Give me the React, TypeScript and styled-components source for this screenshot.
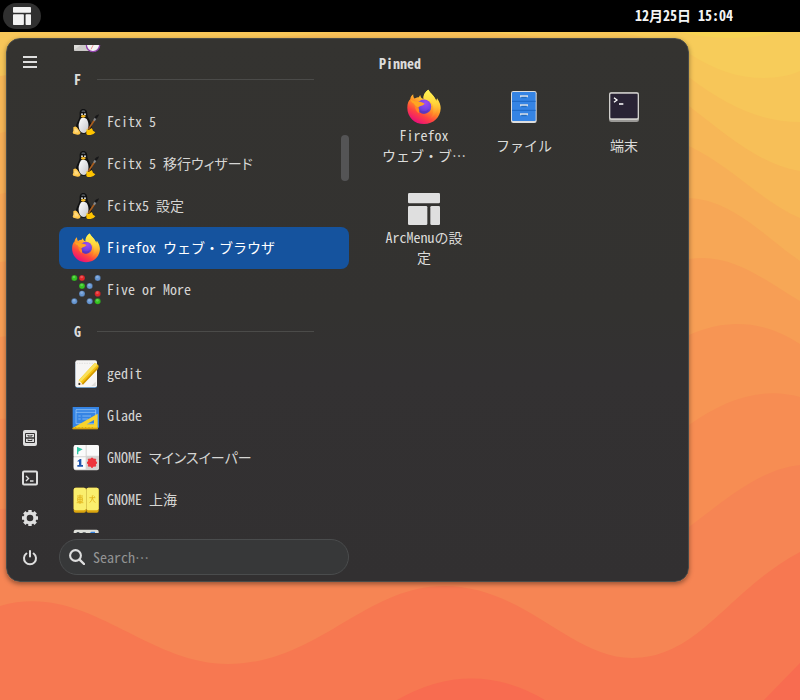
import React, { useId, useLayoutEffect, useRef } from "react";
import styled, { createGlobalStyle } from "styled-components";

const GlobalStyle = createGlobalStyle`
  *, *::before, *::after { box-sizing: border-box; }
  body {
    margin: 0;
    background: #f77851;
    color: #dcdcda;
    font: 14px/20px "Noto Sans CJK JP", "Noto Sans", sans-serif;
    font-feature-settings: "hwid", "palt";
  }
  button, input { font: inherit; font-feature-settings: inherit; color: inherit; }
  button { border: 0; padding: 0; background: none; cursor: pointer; }
  svg { display: block; flex: none; }
`;

const Desktop = styled.div`
  position: relative;
  min-height: 100vh;
  overflow: hidden;
`;

const Wallpaper = styled.svg`
  position: absolute;
  inset: 0;
  width: 100%;
  height: 100%;
`;

const TopBar = styled.header`
  position: relative;
  display: flex;
  align-items: center;
  justify-content: space-between;
  height: 32px;
  padding: 0 67px 0 3px;
  background: #000;
`;

const Launcher = styled.button`
  display: grid;
  place-items: center;
  width: 38px;
  height: 26px;
  border-radius: 13px;
  background: #303030;
`;

const Clock = styled.time`
  padding-bottom: 2px;
  color: #f4f4f4;
  font-weight: 700;
`;

const MenuPanel = styled.main`
  position: relative;
  display: grid;
  grid-template-columns: 40px 290px minmax(0, 1fr);
  column-gap: 9px;
  width: calc(100% - 12px);
  max-width: 683px;
  margin: 6px;
  padding: 3px;
  border: 1px solid #474a49;
  border-radius: 14px;
  background: linear-gradient(#343330, #333230 50%, #333132 62%, #323031);
  box-shadow: 0 2px 5px rgba(0, 0, 0, 0.4);
`;

const Rail = styled.nav`
  display: flex;
  flex-direction: column;
  justify-content: space-between;
`;

const RailButton = styled.button`
  display: grid;
  place-items: center;
  width: 40px;
  height: 40px;
  border-radius: 8px;
`;

const AppColumn = styled.section`
  display: flex;
  flex-direction: column;
  gap: 6px;
  padding: 3px 0;
`;

const ScrollFrame = styled.div`
  position: relative;
`;

const AppList = styled.div`
  height: 488px;
  overflow-y: auto;
  scrollbar-width: none;
`;

const ScrollThumb = styled.div`
  position: absolute;
  top: 90px;
  right: 0;
  width: 8px;
  height: 46px;
  border-radius: 4px;
  background: #545455;
`;

const AppRow = styled.button<{ $selected?: boolean }>`
  display: flex;
  align-items: center;
  gap: 6px;
  width: 100%;
  height: 42px;
  padding: 0 12px;
  border-radius: 8px;
  text-align: left;
  white-space: nowrap;
  color: ${(p) => (p.$selected ? "#fff" : "#d6d6d4")};
  background: ${(p) => (p.$selected ? "#15539e" : "transparent")};
`;

const AppName = styled.span<{ $fullWidth?: boolean }>`
  padding-bottom: 2px;
  font-feature-settings: ${(p) => (p.$fullWidth ? '"hwid"' : "inherit")};
`;

const GroupHeading = styled.h2`
  display: flex;
  align-items: center;
  gap: 16px;
  height: 42px;
  margin: 0;
  padding: 0 35px 2px 15px;
  font-size: 14px;
  font-weight: 700;

  &::after {
    content: "";
    flex: 1;
    height: 1px;
    background: #4b4b49;
  }
`;

const SearchBox = styled.label`
  display: flex;
  align-items: center;
  gap: 8px;
  height: 36px;
  padding: 0 9px;
  border: 1px solid #4a4c4d;
  border-radius: 18px;
  background: #373839;
`;

const SearchInput = styled.input`
  flex: 1;
  min-width: 0;
  padding: 0;
  border: 0;
  outline: 0;
  background: transparent;

  &::placeholder { color: #939494; opacity: 1; }
`;

const PinnedColumn = styled.section`
  margin-left: 16px;
  padding: 11px 0;
`;

const PinnedTitle = styled.h2`
  margin: 0 0 16px 5px;
  font-size: 14px;
  font-weight: 700;
`;

const PinnedGrid = styled.div`
  display: grid;
  grid-template-columns: repeat(3, 100px);
  row-gap: 6px;
`;

const PinnedTile = styled.button`
  display: flex;
  flex-direction: column;
  align-items: center;
  height: 96px;
`;

const PinnedLabel = styled.span`
  display: flex;
  align-items: center;
  height: 40px;
  text-align: center;
  white-space: pre-line;
  font-feature-settings: "hwid";
`;

const waves: [string, string][] = [
  ["#f7c659", "M0 32H340C420 40 520 32 600 32Q645 32 690 54C715 70 738 78 764 78Q785 78 800 71V700H0Z"],
  ["#f7bf58", "M0 76C300 20 560 10 690 78C730 108 763 122 800 122V700H0Z"],
  ["#f7b757", "M0 76C200 60 500 20 689 106C730 138 762 165 800 171V700H0Z"],
  ["#f7af57", "M0 133C200 90 500 60 689 146C730 165 762 202 800 218V700H0Z"],
  ["#f7a756", "M0 194C200 150 500 190 689 198C733 200 765 237 800 261V700H0Z"],
  ["#f79e55", "M0 262C200 240 500 290 689 259C733 252 765 281 800 301V700H0Z"],
  ["#f79554", "M0 337C200 310 500 390 689 335C725 319 762 319 800 344V700H0Z"],
  ["#f78d53", "M0 419C200 400 500 520 689 425C727 398 762 387 800 397V700H0Z"],
  ["#f68554", "M0 509C200 500 500 640 689 527C725 500 760 469 800 465V700H0Z"],
  ["#f77851", "M0 606C86 581 144 664 228 664C317 664 365 586 444 586C525 586 570 658 632 658C699 658 728 590 800 552V700H0Z"],
  ["#f86c50", "M397 700Q472 657 545 700ZM764 700L800 663V700Z"],
];

const DesktopBackground = () => (
  <Wallpaper viewBox="0 0 800 700" preserveAspectRatio="none" aria-hidden="true">
    <rect width="800" height="700" fill="#f7cc5a" />
    <path d="M672 30Q730 46 790 30Z" fill="#f7d354" />
    {waves.map(([fill, d]) => (
      <path key={fill} fill={fill} d={d} />
    ))}
  </Wallpaper>
);

type IconProps = { size?: number };

const LayoutIcon = ({ size = 18, color = "#dfdfdf" }: IconProps & { color?: string }) => (
  <svg width={size} height={size} viewBox="6 6 96 96" fill={color}>
    <rect x="6" y="6" width="96" height="31" rx="4" />
    <rect x="6" y="45" width="58" height="57" rx="4" />
    <rect x="73" y="45" width="29" height="57" rx="4" />
  </svg>
);

const FirefoxIcon = ({ size = 30 }: IconProps) => {
  const id = useId();
  return (
    <svg width={size} height={size} viewBox="-4 -1 110 108">
      <defs>
        <linearGradient id={id + "b"} x1="80" y1="8" x2="28" y2="100" gradientUnits="userSpaceOnUse">
          <stop offset="0" stopColor="#fff44f" />
          <stop offset=".3" stopColor="#ffc235" />
          <stop offset=".52" stopColor="#ff8a26" />
          <stop offset=".74" stopColor="#ff4440" />
          <stop offset="1" stopColor="#ea1078" />
        </linearGradient>
        <linearGradient id={id + "y"} x1="70" y1="0" x2="70" y2="95" gradientUnits="userSpaceOnUse">
          <stop offset="0" stopColor="#fff656" />
          <stop offset=".45" stopColor="#ffd43a" />
          <stop offset="1" stopColor="#ff7a2c" stopOpacity="0" />
        </linearGradient>
        <radialGradient id={id + "p"} cx=".6" cy=".25" r=".8">
          <stop offset="0" stopColor="#a04ef2" />
          <stop offset=".55" stopColor="#7542e5" />
          <stop offset="1" stopColor="#4b3ab8" />
        </radialGradient>
      </defs>
      <path fill={`url(#${id}b)`} d="M65 0C70 12 83 18 88 34L91 26C99 37 102 47 102 57C101 85 80 105 51 105C22 105 0 84 0 55C0 41 4 33 9 29C10 22 13 18 18 14C18 20 19 24 22 27C27 24 32 23 36 23C36 20 38 18 40 17C40 23 44 27 50 28C48 18 54 6 65 0Z" />
      <path fill={`url(#${id}y)`} d="M65 0C70 12 83 18 88 34C96 52 92 78 68 90C79 78 84 60 76 44C71 34 57 32 50 28C48 18 54 6 65 0Z" />
      <circle cx="51" cy="52" r="22" fill={`url(#${id}p)`} />
      <path fill="#ff8424" d="M34 53C35 60 40 66 34 72C26 65 22 55 22 44Z" />
      <path fill="#ffa522" d="M10 29C16 35 23 34 31 36C41 36 48 40 53 43C48 50 38 49 34 54C27 51 22 47 20 42C15 41 11 36 10 29Z" />
      <path fill="#5a34b9" d="M38 62C47 69 59 66 66 59C60 79 38 77 38 62Z" opacity=".6" />
    </svg>
  );
};

const PenguinIcon = () => {
  const id = useId();
  return (
    <svg width="30" height="30" viewBox="0 0 90 90">
      <defs>
        <linearGradient id={id} x1="0" y1="0" x2="1" y2="1">
          <stop offset="0" stopColor="#fff" />
          <stop offset="1" stopColor="#c4c4ca" />
        </linearGradient>
      </defs>
      <path fill="#101112" d="M37 6C46 6 49 13 49 22C49 33 61 43 62 59C63 70 54 80 39 80C23 80 14 72 15 59C16 47 26 37 26 25C25 13 28 6 37 6Z" />
      <path fill="#54595e" d="M31 12Q36 7 43 12L41 16Q36 12 33 16Z" />
      <path fill={`url(#${id})`} d="M30 34Q39 30 47 36C56 49 54 74 40 78C27 79 22 65 23 52Q25 42 30 34Z" />
      <circle cx="33" cy="22" r="3" fill="#d8d8d8" />
      <circle cx="42" cy="22" r="3" fill="#d8d8d8" />
      <path fill="#f6b922" d="M30 26Q37 21 45 27Q38 36 30 29Z" />
      <path fill="#ffc84c" d="M7 61Q15 55 20 64L29 77Q26 85 19 83L7 80Q3 77 7 71Z" />
      <path fill="#fff0be" d="M10 67Q15 61 20 69L22 76L11 77Z" opacity=".45" />
      <path fill="#ffc400" d="M47 66Q54 72 61 63Q65 66 66 71L73 76Q69 82 59 84L50 84Q44 82 46 75Z" />
      <path d="M52 67L70 40" stroke="#a95d1e" strokeWidth="5" />
      <path d="M69 41L74 33" stroke="#87898c" strokeWidth="6" />
      <path fill="#171719" d="M70 32Q73 25 84 22Q84 28 76 36Z" />
    </svg>
  );
};

const dots: [number, number, string][] = [
  [10, 9, "#35c41f"], [33, 9, "#e3282a"], [80, 9, "#6797d2"],
  [33, 33, "#35c41f"], [56, 33, "#6797d2"], [33, 56, "#6797d2"],
  [80, 56, "#e3282a"], [10, 79, "#6797d2"], [56, 79, "#6797d2"], [80, 79, "#35c41f"],
];

const FiveOrMoreIcon = () => (
  <svg width="30" height="30" viewBox="0 0 90 90">
    {dots.map(([x, y, fill]) => (
      <g key={`${x}-${y}`}>
        <circle cx={x} cy={y} r="9" fill={fill} stroke="#292a2c" strokeOpacity=".4" strokeWidth="2" />
        <circle cx={x - 1} cy={y - 3} r="4" fill="#fff" opacity=".22" />
      </g>
    ))}
  </svg>
);

const GeditIcon = () => (
  <svg width="30" height="30" viewBox="0 0 90 90">
    <rect x="13" y="8" width="65" height="79" rx="6" fill="#457bae" />
    <rect x="13" y="4" width="65" height="81" rx="6" fill="#f6f5f4" />
    <path d="M19 13H71" stroke="#c9c7c4" strokeWidth="2" strokeDasharray="2 3" />
    <path d="M61 81L74 68V81Z" fill="#dddbd8" />
    <path d="M23 64L68 15Q72 10 78 15L83 20L81 29L36 76Z" fill="#f5c211" />
    <path d="M23 64L68 15Q71 11 75 13L79 17L29 69Z" fill="#f9e05a" />
    <path d="M32 74L82 22L81 29L36 77Z" fill="#cf9500" />
    <path d="M22 65L35 77L23 77Z" fill="#f0d5b3" />
    <circle cx="25" cy="75" r="3" fill="#272727" />
  </svg>
);

const GladeIcon = () => (
  <svg width="30" height="30" viewBox="0 0 90 90">
    <rect x="5" y="18" width="79" height="62" fill="#3584e4" />
    <path d="M15 26H74V68H15ZM15 34H74M22 45H29M34 45H60M22 54H29M34 54H52" fill="none" stroke="#a3cef7" strokeWidth="2" />
    <path fillRule="evenodd" d="M5 81L80 38V84H5ZM47 70H69V57Z" fill="#f8d32c" />
    <path d="M5 80H80V85H5Z" fill="#d8a10b" />
    <path d="M14 78V80M24 78V80M34 78V80M44 78V80M54 78V80M64 78V80" stroke="#9b790b" strokeWidth="2" />
  </svg>
);

const MinesIcon = () => (
  <svg width="30" height="30" viewBox="0 0 90 90">
    <rect x="8" y="6" width="76" height="76" rx="6" fill="#d5d3d1" />
    <path d="M14 6H44V40H8V12Q8 6 14 6ZM47 6H78Q84 6 84 12V38H47ZM8 43H44V79H14Q8 79 8 73Z" fill="#fafafa" />
    <path d="M19 12L35 19L22 26V34H18V12Z" fill="#2ec6a4" />
    <path d="M20 53L27 48H31V66H36V71H19V66H24V55L20 57Z" fill="#1f55ad" />
    <circle cx="63" cy="59" r="13" fill="#ed333b" />
    <path d="M63 44V74M48 59H78M52 48L74 70M74 48L52 70" stroke="#ed333b" strokeWidth="6" />
  </svg>
);

const MahjonggIcon = () => (
  <svg width="30" height="30" viewBox="0 0 90 90">
    <rect x="8" y="8" width="37" height="75" rx="6" fill="#dba50e" />
    <rect x="46" y="8" width="37" height="75" rx="6" fill="#dba50e" />
    <rect x="8" y="8" width="37" height="68" rx="6" fill="#faee6d" />
    <rect x="46" y="8" width="37" height="68" rx="6" fill="#faee6d" />
    <path d="M18 33H36M20 38H34V49H20ZM20 43H34M17 53H37M27 29V57M55 38H73M64 31V39Q62 48 56 53M64 39Q66 48 73 53M68 32L71 35" fill="none" stroke="#e2b51c" strokeWidth="2.6" />
  </svg>
);

const ClockFileIcon = () => (
  <svg width="30" height="30" viewBox="0 0 90 90">
    <rect x="9" y="8" width="62" height="76" rx="2" fill="#c9c7c5" />
    <rect x="9" y="8" width="62" height="71" rx="2" fill="#deddda" />
    <path d="M13 78L38 60L50 78Z" fill="#cccac8" />
    <circle cx="66" cy="66" r="20" fill="#f6f5f4" stroke="#9141ac" strokeWidth="4" />
    <path d="M66 52V67L60 79" fill="none" stroke="#e66168" strokeWidth="2" />
  </svg>
);

const TilesIcon = () => (
  <svg width="30" height="30" viewBox="0 0 90 90">
    <rect x="8" y="8" width="75" height="75" rx="6" fill="#dedfd9" />
    <path d="M17 15H25V25H17ZM35 16H44V30H35Z" fill="#4c5358" />
    <path d="M50 24L61 14H72V30H50Z" fill="#3584e4" />
  </svg>
);

const FilesIcon = () => (
  <svg width="36" height="36" viewBox="0 0 108 108">
    <rect x="15" y="6" width="77" height="96" rx="7" fill="#dedede" />
    <rect x="18" y="9" width="71" height="87" rx="3" fill="#3584e4" />
    <path d="M18 37H89M18 64H89" stroke="#1c68c5" strokeWidth="3" />
    <path d="M44 25V21H64V25M44 52V48H64V52M44 79V75H64V79" fill="none" stroke="#d5dce4" strokeWidth="4" />
    <path d="M46 26H62M46 53H62M46 80H62" stroke="#2369b6" strokeWidth="3" />
  </svg>
);

const TerminalIcon = () => (
  <svg width="36" height="36" viewBox="0 0 108 108">
    <rect x="9" y="10" width="90" height="89" rx="7" fill="#9a9996" />
    <rect x="9" y="10" width="90" height="83" rx="7" fill="#d0cfcc" />
    <rect x="13" y="14" width="82" height="74" rx="3" fill="#292335" />
    <path d="M24 26L33 33L24 40M39 45H52" fill="none" stroke="#fff" strokeWidth="4" />
  </svg>
);

const HamburgerGlyph = () => (
  <svg width="14" height="12" viewBox="0 0 14 12" fill="#dedede">
    <path d="M0 0H14V2H0ZM0 5H14V7H0ZM0 10H14V12H0Z" />
  </svg>
);

const CabinetGlyph = () => (
  <svg width="16" height="16" viewBox="0 0 16 16" fill="none">
    <rect x="1" y="0" width="14" height="16" rx="2" fill="#dedede" />
    <path d="M3.5 3.5H12.5V8H3.5ZM3.5 8H12.5V12.5H3.5Z" stroke="#323031" />
    <path d="M6 5V6H10V5M6 9.5V10.5H10V9.5" stroke="#323031" />
  </svg>
);

const PromptGlyph = () => (
  <svg width="16" height="16" viewBox="0 0 16 16" fill="none" stroke="#dedede">
    <rect x="1" y="1.5" width="14" height="13" rx="1" strokeWidth="2" />
    <path d="M4 6L6.5 8.5L4 11M8 11H11.5" strokeWidth="1.4" />
  </svg>
);

const GearGlyph = () => (
  <svg width="16" height="16" viewBox="0 0 16 16" fill="none" stroke="#dedede">
    <circle cx="8" cy="8" r="4.9" strokeWidth="3.2" />
    <path d="M8 0V2.4M8 13.6V16M0 8H2.4M13.6 8H16M2.3 2.3L4 4M12 12L13.7 13.7M13.7 2.3L12 4M4 12L2.3 13.7" strokeWidth="3.4" />
  </svg>
);

const PowerGlyph = () => (
  <svg width="16" height="16" viewBox="0 0 16 16" fill="none" stroke="#dedede" strokeWidth="2" strokeLinecap="round">
    <path d="M4.4 3.5A6 6 0 1 0 11.6 3.5M8 1V6.5" />
  </svg>
);

const SearchGlyph = () => (
  <svg width="16" height="16" viewBox="0 0 16 16" fill="none" stroke="#dedede" strokeLinecap="round">
    <circle cx="6.5" cy="6.5" r="5.4" strokeWidth="2.1" />
    <path d="M10.8 10.8L15 15" strokeWidth="2.4" />
  </svg>
);

type AppEntry = { name: string; Icon: React.ComponentType; selected?: boolean };

const groups: { letter?: string; apps: AppEntry[] }[] = [
  { apps: [{ name: "", Icon: ClockFileIcon }] },
  {
    letter: "F",
    apps: [
      { name: "Fcitx 5", Icon: PenguinIcon },
      { name: "Fcitx 5 移行ウィザード", Icon: PenguinIcon },
      { name: "Fcitx5 設定", Icon: PenguinIcon },
      { name: "Firefox ウェブ・ブラウザ", Icon: FirefoxIcon, selected: true },
      { name: "Five or More", Icon: FiveOrMoreIcon },
    ],
  },
  {
    letter: "G",
    apps: [
      { name: "gedit", Icon: GeditIcon },
      { name: "Glade", Icon: GladeIcon },
      { name: "GNOME マインスイーパー", Icon: MinesIcon },
      { name: "GNOME 上海", Icon: MahjonggIcon },
      { name: "", Icon: TilesIcon },
    ],
  },
];

const pinned = [
  { label: "Firefox\nウェブ・ブ…", icon: <FirefoxIcon size={36} /> },
  { label: "ファイル", icon: <FilesIcon /> },
  { label: "端末", icon: <TerminalIcon /> },
  {
    label: "ArcMenuの設\n定",
    icon: (
      <svg width="36" height="36" viewBox="0 0 36 36">
        <g transform="translate(2 2)"><LayoutIcon size={32} /></g>
      </svg>
    ),
  },
];

export default function App() {
  const listRef = useRef<HTMLDivElement>(null);

  useLayoutEffect(() => {
    if (listRef.current) listRef.current.scrollTop = 28;
  }, []);

  return (
    <Desktop lang="ja">
      <GlobalStyle />
      <DesktopBackground />
      <TopBar>
        <Launcher aria-label="ArcMenu">
          <LayoutIcon color="#f2f2f2" />
        </Launcher>
        <Clock>12月25日 15:04</Clock>
      </TopBar>
      <MenuPanel>
        <Rail>
          <RailButton aria-label="Menu"><HamburgerGlyph /></RailButton>
          <div>
            <RailButton aria-label="ファイル"><CabinetGlyph /></RailButton>
            <RailButton aria-label="端末"><PromptGlyph /></RailButton>
            <RailButton aria-label="設定"><GearGlyph /></RailButton>
            <RailButton aria-label="電源"><PowerGlyph /></RailButton>
          </div>
        </Rail>
        <AppColumn>
          <ScrollFrame>
            <AppList ref={listRef}>
              {groups.map(({ letter, apps }, i) => (
                <React.Fragment key={i}>
                  {letter && <GroupHeading>{letter}</GroupHeading>}
                  {apps.map(({ name, Icon, selected }, j) => (
                    <AppRow key={j} $selected={selected}>
                      <Icon />
                      <AppName $fullWidth={name.includes("・")}>{name}</AppName>
                    </AppRow>
                  ))}
                </React.Fragment>
              ))}
            </AppList>
            <ScrollThumb />
          </ScrollFrame>
          <SearchBox htmlFor="app-search">
            <SearchGlyph />
            <SearchInput id="app-search" type="text" aria-label="Search" placeholder="Search…" />
          </SearchBox>
        </AppColumn>
        <PinnedColumn>
          <PinnedTitle>Pinned</PinnedTitle>
          <PinnedGrid>
            {pinned.map(({ label, icon }) => (
              <PinnedTile key={label}>
                {icon}
                <PinnedLabel>{label}</PinnedLabel>
              </PinnedTile>
            ))}
          </PinnedGrid>
        </PinnedColumn>
      </MenuPanel>
    </Desktop>
  );
}
